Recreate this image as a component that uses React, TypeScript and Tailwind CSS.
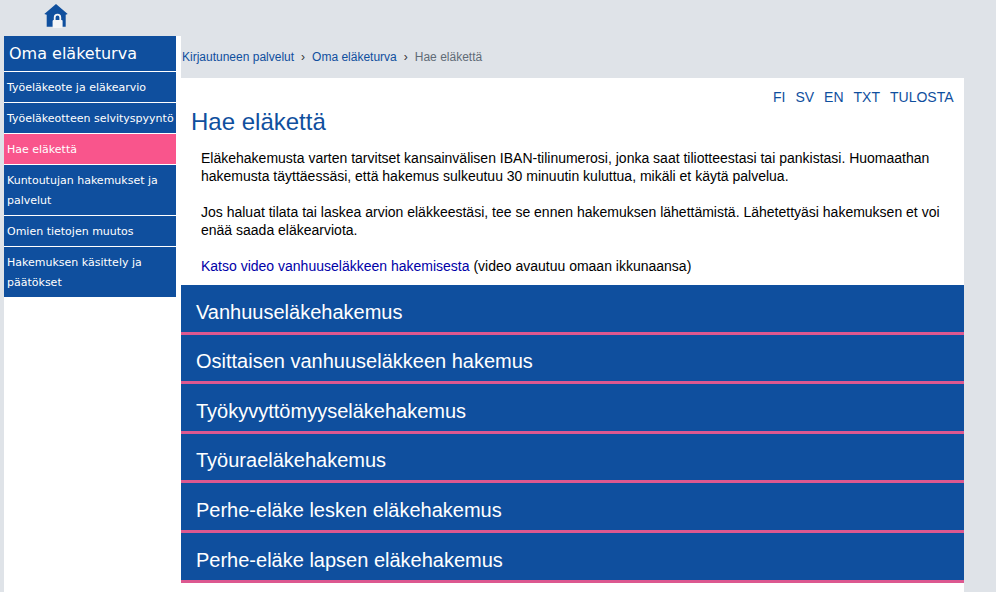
const nav: { label: string; active?: boolean; tall?: boolean }[] = [
  { label: "Työeläkeote ja eläkearvio" },
  { label: "Työeläkeotteen selvityspyyntö" },
  { label: "Hae eläkettä", active: true },
  { label: "Kuntoutujan hakemukset ja palvelut", tall: true },
  { label: "Omien tietojen muutos" },
  { label: "Hakemuksen käsittely ja päätökset", tall: true },
];

const sections = [
  { label: "Vanhuuseläkehakemus", h: "h-[50px] pt-[7px]" },
  { label: "Osittaisen vanhuuseläkkeen hakemus", h: "h-[49px] pt-[6px]" },
  { label: "Työkyvyttömyyseläkehakemus", h: "h-[50px] pt-[7px]" },
  { label: "Työuraeläkehakemus", h: "h-[49px] pt-[6px]" },
  { label: "Perhe-eläke lesken eläkehakemus", h: "h-[50px] pt-[7px]" },
  { label: "Perhe-eläke lapsen eläkehakemus", h: "h-[50px] pt-[7px]" },
];

function HomeLock() {
  return (
    <svg width="24" height="27" viewBox="0 0 24 27">
      <path d="M12 1 L23.7 11 L21.7 11.8 L21.7 23.7 L2.7 23.7 L2.7 11.8 L0.3 11 Z" fill="#0f4f9e" />
      <path d="M10.7 18 V14.5 a2.8 2.8 0 0 1 5.6 0 V18" fill="none" stroke="#f4f5f7" strokeWidth="1.8" />
      <rect x="8.6" y="17" width="10" height="8" rx="1" fill="#f4f5f7" />
    </svg>
  );
}

export default function App() {
  return (
    <div className="h-[592px] w-[996px] overflow-hidden bg-[#dfe3e8] font-['Liberation_Sans',Arial,sans-serif]">
      <div className="flex h-9 items-start pl-[44px] pt-[3px]">
        <HomeLock />
      </div>
      <div className="flex h-[556px] pl-1 pr-8">
        <aside className="h-full w-[177px] shrink-0 bg-white pr-[5px]">
          <h2 className="mb-px flex h-[35px] items-center bg-[#0f4f9e] pl-[5px] pt-px font-['DejaVu_Sans',Verdana,sans-serif] text-[16px] font-normal text-white">
            Oma eläketurva
          </h2>
          <ul className="flex flex-col gap-px">
            {nav.map((n) => (
              <li
                key={n.label}
                className={`flex items-center pl-[3px] pt-[2px] font-['DejaVu_Sans',Verdana,sans-serif] text-[11px] leading-[20px] text-white ${n.tall ? "h-[50px]" : "h-[30px] whitespace-nowrap"} ${n.active ? "bg-[#f9558c]" : "bg-[#0f4f9e]"}`}
              >
                {n.label}
              </li>
            ))}
          </ul>
        </aside>
        <main className="flex min-w-0 flex-1 flex-col">
          <nav className="flex h-[42px] shrink-0 items-center pl-px text-[12px] text-[#0f4f9e]">
            <span>Kirjautuneen palvelut</span>
            <span className="mx-[7px] text-[#333]">›</span>
            <span>Oma eläketurva</span>
            <span className="mx-[7px] text-[#333]">›</span>
            <span className="text-[#5f6b76]">Hae eläkettä</span>
          </nav>
          <div className="flex-1 bg-white">
            <div className="flex h-[18px] justify-end gap-[10px] pr-[10.5px] pt-[10px] text-[14px] leading-[18px] text-[#0f4f9e]">
              <span>FI</span>
              <span>SV</span>
              <span>EN</span>
              <span>TXT</span>
              <span>TULOSTA</span>
            </div>
            <h1 className="mt-[10px] pl-[10px] text-[24px] font-normal leading-[32px] text-[#0f4f9e]">Hae eläkettä</h1>
            <div className="mt-[11px] pl-[20px] pr-[10px] text-[14px] leading-[18px] text-black">
              <p>
                Eläkehakemusta varten tarvitset kansainvälisen IBAN-tilinumerosi, jonka saat tiliotteestasi tai pankistasi. Huomaathan hakemusta täyttäessäsi, että hakemus sulkeutuu 30 minuutin kuluttua, mikäli et käytä palvelua.
              </p>
              <p className="mt-[18px]">
                Jos haluat tilata tai laskea arvion eläkkeestäsi, tee se ennen hakemuksen lähettämistä. Lähetettyäsi hakemuksen et voi enää saada eläkearviota.
              </p>
              <p className="mt-[18px]">
                <a className="text-[#0000a8]">Katso video vanhuuseläkkeen hakemisesta</a> (video avautuu omaan ikkunaansa)
              </p>
            </div>
            <div className="mt-[10px] flex flex-col">
              {sections.map((s) => (
                <div
                  key={s.label}
                  className={`flex ${s.h} items-center border-b-[3px] border-[#dc5890] bg-[#0f4f9e] pl-[15px] text-[20px] text-white`}
                >
                  {s.label}
                </div>
              ))}
            </div>
          </div>
        </main>
      </div>
    </div>
  );
}
